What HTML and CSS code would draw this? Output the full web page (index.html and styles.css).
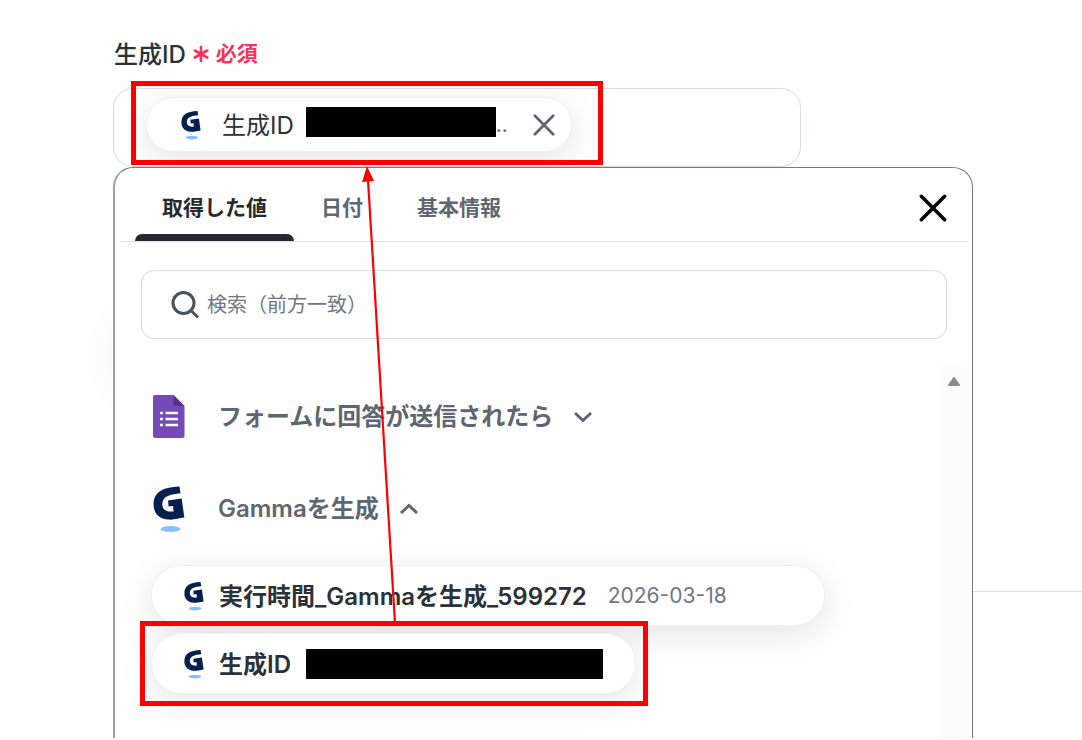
FILE: index.html
```html
<!DOCTYPE html>
<html lang="ja">

<head>
    <meta charset="UTF-8">
    <meta name="viewport" content="width=device-width, initial-scale=1.0">
    <title>生成ID</title>
    <link rel="stylesheet" href="styles.css">
</head>

<body>
    <svg class="sprite" aria-hidden="true">
        <symbol id="gamma" viewBox="0 0 32 46">
            <path fill="#05204f" d="M26.500 .5 27.500 7.300C18 8.300 9.300 9.800 9.300 18.300c.2 6 4.700 8 11.300 7.100L20 19.900l-4.400.5L15 14.500l13.700-2L31.300 31.600C26 32.400 21 34 15.500 33.600 5.500 33 .6 27 .6 18.500.6 6.500 9 1.200 26.500 .5z" />
            <ellipse fill="#86c0fb" cx="17.500" cy="43" rx="10" ry="3" />
        </symbol>
        <symbol id="close" viewBox="0 0 24 24">
            <path d="M2 2 22 22M22 2 2 22" fill="none" stroke="currentColor" stroke-linecap="round" />
        </symbol>
    </svg>

    <div class="page">
        <div class="blob"></div>
        <hr class="divider">

        <div class="label">
            <span class="label-name">生成ID</span>
            <span class="required">
                <svg width="16" height="19" viewBox="0 0 16 19"><path d="M8 4v14M1.800 7.500l12.400 7M14.200 7.500l-12.400 7" stroke="#f5325c" stroke-width="2.600" stroke-linecap="round" /></svg>
                必須
            </span>
        </div>

        <div class="field">
            <div class="field-inner">
                <div class="chip chip-small">
                    <svg class="chip-icon"><use href="#gamma" /></svg>
                    <span class="chip-text">生成ID</span>
                    <span class="mask mask-short"></span>
                    <span class="dots">..</span>
                    <button class="remove" type="button" aria-label="削除"><svg><use href="#close" /></svg></button>
                </div>
            </div>
            <div class="frame frame-field"></div>
        </div>

        <div class="panel">
            <div class="tabs">
                <button class="tab active" type="button">取得した値</button>
                <button class="tab" type="button">日付</button>
                <button class="tab" type="button">基本情報</button>
                <button class="panel-close" type="button" aria-label="閉じる"><svg><use href="#close" /></svg></button>
            </div>

            <label class="search">
                <svg width="28" height="28" viewBox="0 0 28 28" fill="none" stroke="#4a535d" stroke-width="3"><circle cx="12.500" cy="12" r="10.500" /><path d="M20 19.500l7 7" /></svg>
                <input type="text" placeholder="検索（前方一致）" aria-label="検索">
            </label>

            <div class="body">
                <div class="list">
                    <button class="group" type="button">
                        <svg class="group-icon" viewBox="0 0 32 46">
                            <path fill="#7549b8" d="M2 1h18.500L31.500 12v30q0 2-2 2H2q-2 0-2-2V3q0-2 2-2z" />
                            <path fill="#57358f" d="M20.500 1 31.500 12H20.500z" />
                            <path stroke="#fff" stroke-width="2.600" d="M7 19h3M12.500 19h12.500M7 25h3M12.500 25h12.500M7 31h3M12.500 31h12.500" />
                        </svg>
                        <span class="group-name">フォームに回答が送信されたら</span>
                        <svg class="chevron" viewBox="0 0 20 12"><path d="M2 2l8 7.500L18 2" /></svg>
                    </button>
                    <button class="group" type="button">
                        <svg class="group-icon"><use href="#gamma" /></svg>
                        <span class="group-name">Gammaを生成</span>
                        <svg class="chevron" viewBox="0 0 20 12"><path d="M2 10l8-7.500L18 10" /></svg>
                    </button>

                    <div class="chips">
                        <button class="chip" type="button">
                            <svg class="chip-icon"><use href="#gamma" /></svg>
                            <span class="chip-text">実行時間_Gammaを生成_599272</span>
                            <span class="chip-value">2026-03-18</span>
                        </button>
                        <div class="target">
                            <button class="chip" type="button">
                                <svg class="chip-icon"><use href="#gamma" /></svg>
                                <span class="chip-text">生成ID</span>
                                <span class="mask"></span>
                            </button>
                            <div class="frame frame-chip"></div>
                        </div>
                    </div>
                </div>
                <div class="scrollbar">
                    <svg width="14" height="11" viewBox="0 0 14 11"><path d="M7 2 12 9H2z" fill="#8b8b8b" stroke="#8b8b8b" stroke-width="2" stroke-linejoin="round" /></svg>
                </div>
            </div>
        </div>

        <svg class="arrow" width="40" height="460" viewBox="0 0 40 460">
            <path d="M35 457 8 14" stroke="#f00" stroke-width="2.200" />
            <path d="M7 0 14 15 2 16z" fill="#f00" />
        </svg>
    </div>
</body>

</html>
```
FILE: styles.css
```css
* {
    box-sizing: border-box;
}

body {
    margin: 0;
    background: #fefefe;
    color: #2b3138;
    font-family: Inter, "Noto Sans CJK JP", sans-serif;
}

button {
    margin: 0;
    padding: 0;
    border: 0;
    background: none;
    color: inherit;
    font: inherit;
    cursor: pointer;
}

svg {
    display: block;
    flex: none;
}

.sprite {
    position: absolute;
    width: 0;
    height: 0;
}

.page {
    position: relative;
    display: flex;
    flex-direction: column;
    min-height: 100vh;
    padding: 38px 109px 2px 113px;
    overflow: hidden;
}

/* page content behind the panel */
.blob {
    position: absolute;
    top: 325px;
    left: 125px;
    width: 60px;
    height: 60px;
    border-radius: 30px;
    box-shadow: 0 0 40px 4px rgba(40, 70, 60, 0.12);
}

.divider {
    position: absolute;
    top: 591px;
    left: 160px;
    right: 0;
    height: 1px;
    margin: 0;
    border: 0;
    background: #e0e1e3;
}

.label {
    display: flex;
    align-items: center;
    gap: 7px;
    height: 50px;
    padding-bottom: 22px;
    padding-left: 1px;
    font-size: 24px;
    font-weight: 500;
}

.required {
    display: flex;
    align-items: center;
    gap: 7px;
    color: #f5325c;
    font-size: 21px;
    font-weight: 600;
}

.field {
    position: relative;
    height: 79px;
    margin-right: 172px;
    padding-left: 18px;
    border: 1px solid #d5dce4;
    border-radius: 20px;
}

.field-inner {
    width: 470px;
    height: 77px;
    padding: 8px 14px;
    overflow: hidden;
}

.chip {
    display: flex;
    align-items: center;
    height: 61px;
    padding: 0 32px;
    border: 1px solid #edf1f5;
    border-radius: 31px;
    background: #fff;
    box-shadow: 0 8px 32px rgba(0, 0, 0, 0.1);
    font-size: 24px;
    font-weight: 600;
}

.chip-small {
    width: 426px;
    height: 55px;
    font-weight: 400;
}

.chip-icon {
    width: 20px;
    height: 30px;
    margin-right: 15px;
}

.chip-text {
    padding-bottom: 2px;
}

.chip-small .chip-icon {
    margin-left: 2px;
    margin-right: 21px;
}

.chip-value {
    margin-left: 21px;
    color: #6f7782;
    font-size: 21px;
    font-weight: 400;
}

.mask {
    width: 297px;
    height: 30px;
    margin-left: 15px;
    background: #000;
}

.mask-short {
    width: 190px;
    margin-left: 12px;
    margin-bottom: 5px;
}

.dots {
    color: #6f7782;
    font-size: 21px;
}

.remove {
    margin-left: auto;
    margin-right: -16px;
    color: #5d6671;
}

.remove svg {
    width: 22px;
    height: 22px;
    stroke-width: 3;
}

.frame {
    position: absolute;
    border: 5px solid #f00;
    pointer-events: none;
}

.frame-field {
    top: -8px;
    left: 17px;
    width: 472px;
    height: 84px;
}

.frame-chip {
    top: -12px;
    left: -11px;
    right: -12px;
    bottom: -12px;
}

.panel {
    position: relative;
    display: flex;
    flex: 1;
    flex-direction: column;
    padding: 0 5px;
    border: 1px solid #737b86;
    border-left: 2px solid #9aa0a7;
    border-bottom: 0;
    border-radius: 20px 20px 0 0;
    background: #fefefe;
}

.tabs {
    display: flex;
    align-items: stretch;
    height: 74px;
    padding: 0 20px 0 15px;
    border-bottom: 1px solid #d9e0e7;
    color: #5d6671;
    font-size: 21px;
    font-weight: 600;
}

.tab {
    position: relative;
    padding: 2px 27px 0;
}

.tab.active {
    color: #252a30;
}

.tab.active::after {
    content: "";
    position: absolute;
    left: 0;
    right: 0;
    bottom: 0;
    height: 7px;
    border-radius: 7px 7px 0 0;
    background: #252a30;
}

.panel-close {
    margin-left: auto;
    padding-top: 6px;
    color: #000;
}

.panel-close svg {
    width: 28px;
    height: 28px;
    stroke-width: 3;
}

.search {
    display: flex;
    align-items: center;
    gap: 8px;
    height: 69px;
    margin: 28px 20px 27px 21px;
    padding: 0 29px;
    border: 1px solid #d5dce4;
    border-radius: 13px;
}

.search input {
    flex: 1;
    min-width: 0;
    padding: 0;
    border: 0;
    outline: 0;
    background: none;
    color: #2b3138;
    font: inherit;
    font-size: 20px;
}

.search input::placeholder {
    color: #6f7782;
    opacity: 1;
}

.body {
    display: flex;
    flex: 1;
}

.list {
    flex: 1;
    padding: 27px 0 0 33px;
}

.group {
    display: flex;
    align-items: center;
    height: 47px;
    margin-bottom: 45px;
    color: #5d6671;
    font-size: 24px;
    font-weight: 600;
}

.group-icon {
    width: 32px;
    height: 46px;
    margin-right: 33px;
}

.group-name {
    padding-bottom: 4px;
}

.chevron {
    width: 20px;
    height: 12px;
    margin-left: 20px;
    fill: none;
    stroke: #5d6671;
    stroke-width: 3;
}

.chips {
    display: flex;
    flex-direction: column;
    align-items: flex-start;
    gap: 7px;
    margin-top: -12px;
    margin-left: -2px;
}

.chips > .chip {
    padding-right: 97px;
}

.target {
    position: relative;
}

.scrollbar {
    width: 26px;
    padding: 10px 6px;
    background: #fbfbfb;
}

.arrow {
    position: absolute;
    top: 166px;
    left: 360px;
}
```
